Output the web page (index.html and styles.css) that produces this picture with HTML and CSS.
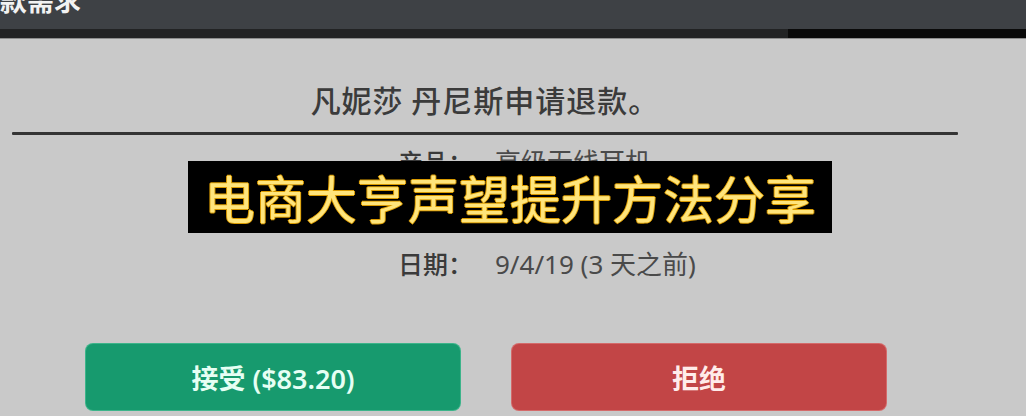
FILE: index.html
```html
<!DOCTYPE html>
<html lang="zh-CN">
<head>
<meta charset="utf-8">
<title>退款需求</title>
<link rel="stylesheet" href="styles.css">
</head>
<body>
  <header class="topbar">
    <div class="topbar-title">退款需求</div>
  </header>
  <div class="topstrip"></div>

  <main class="dialog">
    <h1 class="headline">凡妮莎 丹尼斯申请退款。</h1>
    <div class="rule"></div>

    <div class="details">
      <div class="row"><span class="label">产品：</span><span class="value">高级无线耳机</span></div>
      <div class="row"><span class="label">原因：</span><span class="value">商品与描述不符</span></div>
      <div class="row"><span class="label">日期：</span><span class="value">9/4/19 (3 天之前)</span></div>
    </div>

    <div class="actions">
      <button class="btn btn-accept">接受 ($83.20)</button>
      <button class="btn btn-reject">拒绝</button>
    </div>

    <div class="banner">电商大亨声望提升方法分享</div>
  </main>
</body>
</html>
```

FILE: styles.css
```css
html, body {
  margin: 0;
  padding: 0;
}

body {
  width: 1026px;
  height: 416px;
  overflow: hidden;
  background: #c9c9c9;
  font-family: "Noto Sans CJK SC", "Noto Sans", sans-serif;
}

.topbar {
  height: 29px;
  background: #3e4145;
  overflow: hidden;
}

.topbar-title {
  margin-top: -17px;
  margin-left: -27px;
  font-size: 27px;
  line-height: 34px;
  font-weight: 700;
  color: #f2f2f2;
}

.topstrip {
  height: 9px;
  background: linear-gradient(to right, #222324 0, #222324 788px, #0a0a0a 788px);
  border-bottom: 1px solid #8d8d8d;
}

.dialog {
  position: relative;
  width: 970px;
  height: 377px;
  padding-top: 40px;
  box-sizing: border-box;
}

.headline {
  margin: 0;
  height: 40px;
  font-size: 30px;
  line-height: 40px;
  font-weight: 500;
  letter-spacing: 1px;
  color: #3b3b3b;
  text-align: center;
}

.rule {
  margin: 13px 12px 0;
  height: 3px;
  background: #343434;
  border-radius: 1px;
}

.details {
  margin: 0 0 0 398px;
  display: flex;
  flex-direction: column;
}

.row {
  display: flex;
  height: 51px;
  align-items: center;
  font-size: 25px;
  color: #464646;
}

.label {
  width: 97px;
  font-weight: 500;
  color: #3a3a3a;
}

.value {
  font-family: "Noto Sans", "Noto Sans CJK SC", sans-serif;
  font-size: 26px;
  font-weight: 400;
  color: #4a4a4a;
}

.actions {
  margin-top: 56px;
  padding-left: 86px;
  display: flex;
  gap: 52px;
}

.btn {
  width: 374px;
  height: 66px;
  border: none;
  border-radius: 7px;
  font-family: "Noto Sans", "Noto Sans CJK SC", sans-serif;
  font-size: 27px;
  font-weight: 600;
  padding: 0;
}

.btn-accept {
  background: #179a6e;
  color: #e6fff4;
  box-shadow: 0 0 0 1px #3cb48a;
}

.btn-reject {
  background: #c24546;
  color: #ffecea;
  box-shadow: 0 0 0 1px #d46a6a;
}

/* caption strip laid over the dialog */
.banner {
  position: absolute;
  left: 188px;
  top: 122px;
  width: 644px;
  height: 72px;
  background: #000;
  color: #ffe57c;
  font-size: 51px;
  line-height: 72px;
  font-weight: 400;
  text-align: center;
  white-space: nowrap;
  text-shadow:
    1px 0 0 #d99a00, -1px 0 0 #d99a00,
    0 1px 0 #d99a00, 0 -1px 0 #d99a00;
}
```
